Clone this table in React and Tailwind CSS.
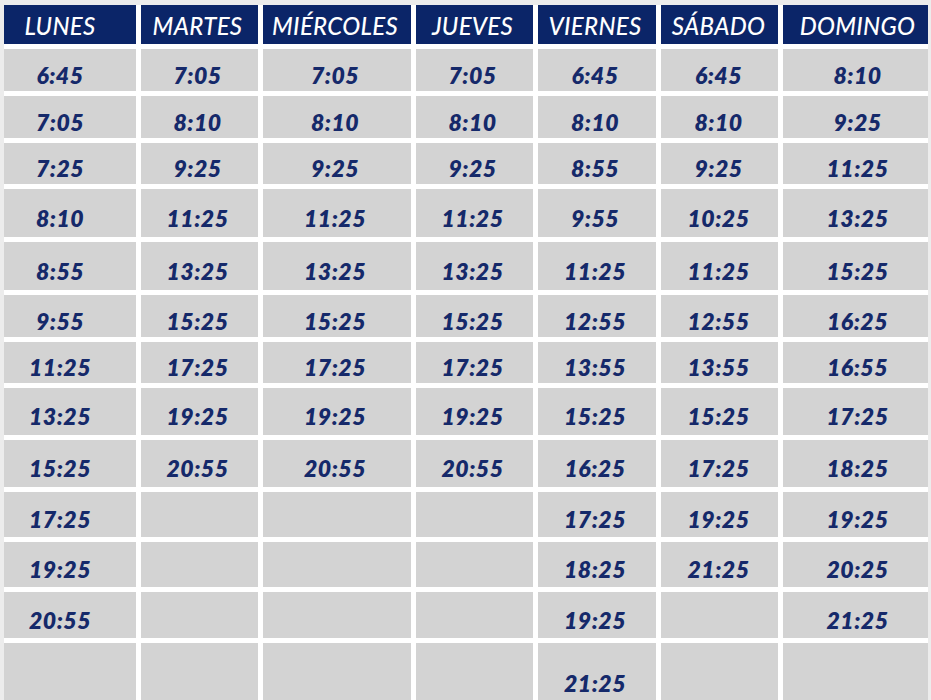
import React from "react";

const days = [
  { name: "LUNES", pad: "pr-[20px]", times: ["6:45", "7:05", "7:25", "8:10", "8:55", "9:55", "11:25", "13:25", "15:25", "17:25", "19:25", "20:55"] },
  { name: "MARTES", pad: "pr-[4px]", times: ["7:05", "8:10", "9:25", "11:25", "13:25", "15:25", "17:25", "19:25", "20:55"] },
  { name: "MIÉRCOLES", pad: "pr-[4px]", times: ["7:05", "8:10", "9:25", "11:25", "13:25", "15:25", "17:25", "19:25", "20:55"] },
  { name: "JUEVES", pad: "pr-[4px]", times: ["7:05", "8:10", "9:25", "11:25", "13:25", "15:25", "17:25", "19:25", "20:55"] },
  { name: "VIERNES", pad: "pr-[4px]", times: ["6:45", "8:10", "8:55", "9:55", "11:25", "12:55", "13:55", "15:25", "16:25", "17:25", "18:25", "19:25", "21:25"] },
  { name: "SÁBADO", pad: "pr-[2px]", times: ["6:45", "8:10", "9:25", "10:25", "11:25", "12:55", "13:55", "15:25", "17:25", "19:25", "21:25"] },
  { name: "DOMINGO", pad: "pl-[4px]", times: ["8:10", "9:25", "11:25", "13:25", "15:25", "16:25", "16:55", "17:25", "18:25", "19:25", "20:25", "21:25"] },
];

const ROWS = 13;

export default function App() {
  return (
    <div className="h-[700px] w-[931px] overflow-hidden bg-[#ececec] pt-[5px] pl-[4px] font-['Lato','Liberation_Sans',sans-serif]">
      <div className="grid w-max grid-flow-col grid-cols-[132px_117px_148px_117px_118px_117px_145px] grid-rows-[39px_42px_42px_41px_48px_48px_42px_41px_47px_47px_45px_45px_46px_70px] gap-[5px] bg-white">
        {days.map((d) => (
          <React.Fragment key={d.name}>
            {/* header */}
            <div className={`flex items-center justify-center bg-[#0b2568] pt-[3px] text-[24px] font-medium italic tracking-[0.3px] text-white ${d.pad}`}>
              {d.name}
            </div>
            {Array.from({ length: ROWS }).map((_, i) => (
              <div
                key={i}
                className={`flex items-center justify-center bg-[#d3d3d3] pt-[10px] text-[23px] font-extrabold italic tracking-[0.5px] text-[#15296a] ${d.pad}`}
              >
                {d.times[i] || ""}
              </div>
            ))}
          </React.Fragment>
        ))}
      </div>
    </div>
  );
}
